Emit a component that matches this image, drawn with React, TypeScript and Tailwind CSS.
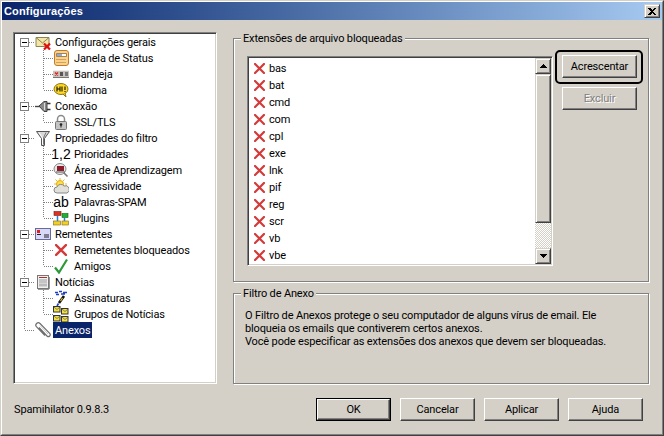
import type { ReactNode } from "react"

const RedX = ({ size = 11 }: { size?: number }) => (
  <svg width={size} height={size} viewBox="0 0 11 11" className="shrink-0">
    <path d="M1 1 10 10M10 1 1 10" stroke="#d43a3a" strokeWidth="2.2" strokeLinecap="square" fill="none" />
  </svg>
)

const Ico = ({ children }: { children: ReactNode }) => (
  <svg width="16" height="16" viewBox="0 0 16 16" className="shrink-0">
    {children}
  </svg>
)

const MailIcon = () => (
  <Ico>
    <path d="M1 3.5h13v9H1z" fill="#f2e6a8" stroke="#8c8450" />
    <path d="M1 3.5 7.5 9 14 3.5" fill="none" stroke="#8c8450" />
    <path d="M9 9.5 15 15.5M15 9.5 9 15.5" stroke="#e01010" strokeWidth="2.2" fill="none" />
  </Ico>
)

const StatusIcon = () => (
  <Ico>
    <rect x="1.5" y="0.5" width="14" height="15" rx="2.5" fill="#fbd28c" stroke="#c07a28" />
    <path d="M3.5 3.5h10v3h-10z" fill="#fff" stroke="#8a6a40" strokeWidth=".8" />
    <path d="M4 5h5" stroke="#3050a0" />
    <path d="M3.5 9.5h10M3.5 12.5h10" stroke="#a87028" strokeDasharray="1 1" />
  </Ico>
)

const TrayIcon = () => (
  <Ico>
    <rect x="0" y="4" width="16" height="8" fill="#c8c4bc" />
    <path d="M0 4.5h16" stroke="#eee" />
    <path d="M0 11.5h16" stroke="#777" />
    <path d="M2 6.5 5 9.5M5 6.5 2 9.5" stroke="#e02020" strokeWidth="1.3" />
    <rect x="7" y="6" width="3" height="4" fill="#555" />
    <rect x="12" y="6" width="3" height="4" fill="#777" />
  </Ico>
)

const HiIcon = () => (
  <Ico>
    <ellipse cx="8" cy="7" rx="7" ry="5.5" fill="#ffd820" stroke="#8a7420" />
    <path d="M10 12 13 15 12 11" fill="#ffd820" stroke="#8a7420" />
    <path d="M4 4.5v5M7 4.5v5M4 7h3M9 4.5v5M12 4.5v3.5M12 9v1" stroke="#111" strokeWidth="1.1" fill="none" />
  </Ico>
)

const PlugIcon = () => (
  <Ico>
    <path d="M0 8.5h5" stroke="#444" strokeWidth="1.4" />
    <path d="M4 8 9 3.5h3v10H9z" fill="#8a8a8a" stroke="#444" />
    <path d="M12 5.5h3.5M12 11.5h3.5" stroke="#333" strokeWidth="1.4" />
    <path d="M9.5 5v7" stroke="#ddd" />
  </Ico>
)

const LockIcon = () => (
  <Ico>
    <path d="M4.5 8V5a3.5 3.5 0 0 1 7 0v3" fill="none" stroke="#8a8a8a" strokeWidth="1.5" />
    <rect x="2.5" y="7.5" width="11" height="8" rx="1" fill="#c4c4c4" stroke="#777" />
    <circle cx="8" cy="10.5" r="1.3" fill="#222" />
    <path d="M8 11v2.5" stroke="#222" />
  </Ico>
)

const FunnelIcon = () => (
  <Ico>
    <path d="M1.5 1.5h13L9.5 8.5v7h-3v-7z" fill="#d8d8d8" stroke="#555" />
    <path d="M4 2.5 7.5 8v6.5" fill="none" stroke="#fff" />
    <path d="M11 2.5 8.5 8v6.5" fill="none" stroke="#777" />
  </Ico>
)

const ScopeIcon = () => (
  <Ico>
    <ellipse cx="7" cy="7" rx="6" ry="5.5" fill="#e8e8e8" stroke="#8a8a8a" />
    <rect x="4" y="4" width="7" height="5" fill="#8c1c2c" />
    <path d="M3 10h9" stroke="#555" />
    <path d="M11 11 14.5 14.5" stroke="#777" strokeWidth="1.6" />
  </Ico>
)

const WeatherIcon = () => (
  <Ico>
    <circle cx="7" cy="6" r="3.5" fill="#ffe040" stroke="#e0a820" />
    <path d="M7 0v2M1 6h2M2.5 1.5 4 3M11.5 1.5 10 3M12 6h2" stroke="#e8b820" />
    <path d="M4 15a3 3 0 0 1 0-6 4 4 0 0 1 7-1 3.5 3.5 0 0 1 3 7z" fill="#e0e0d8" stroke="#888" />
  </Ico>
)

const PluginsIcon = () => (
  <Ico>
    <rect x="1" y="1.5" width="7" height="4" fill="#e03020" stroke="#702010" strokeWidth=".6" />
    <rect x="9" y="3.5" width="6" height="4" fill="#20b030" stroke="#106018" strokeWidth=".6" />
    <rect x="0.5" y="11" width="7" height="4" fill="#f4d020" stroke="#806810" strokeWidth=".6" />
    <rect x="9" y="11" width="6.5" height="4" fill="#f4d020" stroke="#806810" strokeWidth=".6" />
    <path d="M4.5 6v5M11.5 8v3" stroke="#2080e8" strokeWidth="1.5" />
  </Ico>
)

const CardIcon = () => (
  <Ico>
    <rect x="0.5" y="2.5" width="15" height="11" fill="#d8d8f8" stroke="#6a6a9a" />
    <path d="M2 4h3v3H2z" fill="#e02020" />
    <path d="M9 9h5M9 11h5M2 8.5h4" stroke="#222" />
  </Ico>
)

const CheckIcon = () => (
  <Ico>
    <path d="M2 9.5 6 14.5 14 1.5" fill="none" stroke="#2d9a3a" strokeWidth="2.2" />
  </Ico>
)

const NewsIcon = () => (
  <Ico>
    <rect x="2.5" y="1.5" width="11" height="13" fill="#f0f0f0" stroke="#777" />
    <path d="M4 3.5h8" stroke="#b03030" />
    <path d="M4 6h8M4 8h8" stroke="#999" />
    <rect x="4" y="9.5" width="8" height="3" fill="#bbb" />
    <path d="M3 15.5h11M14.5 3v12" stroke="#999" />
  </Ico>
)

const PenIcon = () => (
  <Ico>
    <path d="M2 2.5h3M6 1.5h3M10 2.5h4M3 4.5h3M8 4h4" stroke="#2040c0" strokeWidth="1.4" />
    <path d="M11 6 6 13" stroke="#111" strokeWidth="2.6" />
    <path d="M9.5 8 7.5 11" stroke="#f0d020" strokeWidth="1.1" />
    <path d="M5.5 13.5 4 16" stroke="#2040e0" strokeWidth="1.6" />
  </Ico>
)

const GroupsIcon = () => (
  <Ico>
    {[[0, 0], [8, 2], [0, 9], [8, 10]].map(([x, y]) => (
      <g key={`${x}-${y}`}>
        <rect x={x + 0.5} y={y + 0.5} width="6.5" height="5.5" fill="#f4e040" stroke="#333" />
        <path d={`M${x + 1} ${y + 1}l3 2.5 3-2.5`} fill="none" stroke="#555" strokeWidth=".7" />
      </g>
    ))}
  </Ico>
)

const ClipIcon = () => (
  <Ico>
    <path d="M4 5.5 12 14a1.9 1.9 0 0 0 2.7-2.7L5 1.5A2.4 2.4 0 0 0 1.6 4.9L10 13.5" fill="none" stroke="#6e6e6e" strokeWidth="1.2" />
    <path d="M5 3.5 13 12" fill="none" stroke="#c8c8c8" strokeWidth="1" />
  </Ico>
)

const TextIcon = ({ children }: { children: ReactNode }) => (
  <span className="w-4 h-4 shrink-0 flex items-center justify-center leading-none text-[14px] tracking-normal font-['Liberation_Sans',Arial,sans-serif]">
    {children}
  </span>
)

const RootLines = ({ first, last, box = true }: { first?: boolean; last?: boolean; box?: boolean }) => (
  <svg width="20" height="16" viewBox="0 0 20 16" className="shrink-0" shapeRendering="crispEdges">
    <path d={`M9.5 ${first ? 8 : 0}V${last ? 8 : 16}M${box ? 14 : 10} 8.5H20`} stroke="#808080" strokeDasharray="1 1" fill="none" />
    {box && (
      <>
        <rect x="5.5" y="4.5" width="8" height="8" fill="#fff" stroke="#808080" />
        <path d="M7 8.5h5" stroke="#000" />
      </>
    )}
  </svg>
)

const ChildLines = ({ last }: { last?: boolean }) => (
  <svg width="38" height="16" viewBox="0 0 38 16" className="shrink-0" shapeRendering="crispEdges">
    <path d={`M9.5 0V16M28.5 0V${last ? 8 : 16}M29 8.5H38`} stroke="#808080" strokeDasharray="1 1" fill="none" />
  </svg>
)

const RootRow = ({ icon, label, first, last, box, selected }: { icon: ReactNode; label: string; first?: boolean; last?: boolean; box?: boolean; selected?: boolean }) => (
  <div className="flex items-center h-4">
    <RootLines first={first} last={last} box={box} />
    {icon}
    <span className={`ml-[2px] px-[2px] h-4 leading-[18px] ${selected ? "bg-[#0a246a] text-white" : ""}`}>{label}</span>
  </div>
)

const ChildRow = ({ icon, label, last }: { icon: ReactNode; label: string; last?: boolean }) => (
  <div className="flex items-center h-4">
    <ChildLines last={last} />
    {icon}
    <span className="ml-[3px] px-[2px] h-4 leading-[18px]">{label}</span>
  </div>
)

const Tree = () => (
  <div className="w-[204px] h-[352px] p-px bg-white border border-[#808080] border-r-white border-b-white shadow-[inset_1px_1px_0_#404040,inset_-1px_-1px_0_#d4d0c8] overflow-hidden">
    <RootRow first icon={<MailIcon />} label="Configurações gerais" />
    <ChildRow icon={<StatusIcon />} label="Janela de Status" />
    <ChildRow icon={<TrayIcon />} label="Bandeja" />
    <ChildRow last icon={<HiIcon />} label="Idioma" />
    <RootRow icon={<PlugIcon />} label="Conexão" />
    <ChildRow last icon={<LockIcon />} label="SSL/TLS" />
    <RootRow icon={<FunnelIcon />} label="Propriedades do filtro" />
    <ChildRow icon={<TextIcon>1,2</TextIcon>} label="Prioridades" />
    <ChildRow icon={<ScopeIcon />} label="Área de Aprendizagem" />
    <ChildRow icon={<WeatherIcon />} label="Agressividade" />
    <ChildRow icon={<TextIcon>ab</TextIcon>} label="Palavras-SPAM" />
    <ChildRow last icon={<PluginsIcon />} label="Plugins" />
    <RootRow icon={<CardIcon />} label="Remetentes" />
    <ChildRow icon={<div className="w-4 flex justify-center"><RedX size={12} /></div>} label="Remetentes bloqueados" />
    <ChildRow last icon={<CheckIcon />} label="Amigos" />
    <RootRow icon={<NewsIcon />} label="Notícias" />
    <ChildRow icon={<PenIcon />} label="Assinaturas" />
    <ChildRow last icon={<GroupsIcon />} label="Grupos de Notícias" />
    <RootRow last box={false} selected icon={<ClipIcon />} label="Anexos" />
  </div>
)

const Btn = ({ label, disabled, dark }: { label: string; disabled?: boolean; dark?: boolean }) => {
  const btn = (
    <button
      className={`block w-full h-full bg-[#d4d0c8] border border-white border-r-[#404040] border-b-[#404040] shadow-[inset_-1px_-1px_0_#808080] ${
        disabled ? "text-[#808080] [text-shadow:1px_1px_0_#fff]" : "text-black"
      }`}
    >
      {label}
    </button>
  )
  return dark ? <div className="w-[75px] h-[23px] border border-black">{btn}</div> : <div className="w-[75px] h-[23px]">{btn}</div>
}

const Group = ({ title, className, children }: { title: string; className: string; children: ReactNode }) => (
  <div className={`relative border border-[#808080] shadow-[inset_1px_1px_0_#fff,1px_1px_0_#fff] ${className}`}>
    <span className="absolute left-[7px] -top-[7px] px-[2px] bg-[#d4d0c8] leading-[13px]">{title}</span>
    {children}
  </div>
)

const ScrollBtn = ({ up }: { up?: boolean }) => (
  <div className="h-4 bg-[#d4d0c8] border border-[#d4d0c8] border-r-[#404040] border-b-[#404040] shadow-[inset_1px_1px_0_#fff,inset_-1px_-1px_0_#808080] flex items-center justify-center shrink-0">
    <svg width="7" height="4" viewBox="0 0 7 4" shapeRendering="crispEdges">
      <path d={up ? "M3.5 0 7 4H0z" : "M0 0h7L3.5 4z"} fill="#000" />
    </svg>
  </div>
)

const Extensions = () => {
  const exts = ["bas", "bat", "cmd", "com", "cpl", "exe", "lnk", "pif", "reg", "scr", "vb", "vbe"]
  return (
    <div className="mt-[6px] w-[306px] h-[210px] p-px flex bg-white border border-[#808080] border-r-white border-b-white shadow-[inset_1px_1px_0_#404040,inset_-1px_-1px_0_#d4d0c8] overflow-hidden">
      <div className="flex-1 pt-[2px] pl-[5px]">
        {exts.map((e) => (
          <div key={e} className="h-[17px] flex items-center gap-[4px]">
            <RedX />
            <span>{e}</span>
          </div>
        ))}
      </div>
      <div className="w-4 flex flex-col">
        <ScrollBtn up />
        <div className="h-[149px] shrink-0 bg-[#d4d0c8] border border-[#d4d0c8] border-r-[#404040] border-b-[#404040] shadow-[inset_1px_1px_0_#fff,inset_-1px_-1px_0_#808080]" />
        <div className="flex-1 bg-[repeating-conic-gradient(#d4d0c8_0_25%,#fff_0_50%)] bg-size-[2px_2px]" />
        <ScrollBtn />
      </div>
    </div>
  )
}

const App = () => {
  return (
    <div className="w-[664px] h-[436px] bg-[#d4d0c8] border border-[#d4d0c8] border-r-[#404040] border-b-[#404040] text-[11px] leading-[13px] tracking-[-0.15px] text-black font-['Roboto','Liberation_Sans',Arial,sans-serif] overflow-hidden">
      <div className="h-full border border-white border-r-[#808080] border-b-[#808080] flex flex-col">
        <div className="h-[18px] shrink-0 flex items-center justify-between pl-[2px] pr-[2px] bg-gradient-to-r from-[#0a246a] to-[#a6caf0]">
          <span className="font-bold text-white tracking-[0.15px] font-['Liberation_Sans',Arial,sans-serif]">Configurações</span>
          <div className="w-4 h-[14px] bg-[#d4d0c8] border border-[#d4d0c8] border-r-[#404040] border-b-[#404040] shadow-[inset_1px_1px_0_#fff,inset_-1px_-1px_0_#808080] flex items-center justify-center">
            <svg width="8" height="7" viewBox="0 0 8 7" shapeRendering="crispEdges">
              <path d="M0 0h2l2 2 2-2h2L5 3.5 8 7H6L4 5 2 7H0l3-3.5z" fill="#000" />
            </svg>
          </div>
        </div>

        <div className="flex gap-4 px-[11px] pt-[12px]">
          <Tree />
          <div className="pt-[6px] flex flex-col gap-[11px]">
            <Group title="Extensões de arquivo bloqueadas" className="w-[416px] h-[244px] pl-[13px] pt-[11px] flex items-start">
              <Extensions />
              <div className="ml-[2px] flex flex-col">
                <div className="w-[88px] h-[34px] rounded-[5px] border-2 border-black px-[5px] py-[3px]">
                  <Btn label="Acrescentar" />
                </div>
                <div className="mt-[3px] ml-[7px]">
                  <Btn label="Excluir" disabled />
                </div>
              </div>
            </Group>
            <Group title="Filtro de Anexo" className="w-[416px] h-[91px] pl-[11px] pt-[15px]">
              <p className="whitespace-nowrap">
                O Filtro de Anexos protege o seu computador de alguns vírus de email. Ele
                <br />
                bloqueia os emails que contiverem certos anexos.
                <br />
                Você pode especificar as extensões dos anexos que devem ser bloqueadas.
              </p>
            </Group>
          </div>
        </div>

        <div className="flex items-center justify-between pl-[12px] pr-[19px] pt-[14px]">
          <span>Spamihilator 0.9.8.3</span>
          <div className="flex gap-[9px]">
            <Btn label="OK" dark />
            <Btn label="Cancelar" />
            <Btn label="Aplicar" />
            <Btn label="Ajuda" />
          </div>
        </div>
      </div>
    </div>
  )
}

export default App
